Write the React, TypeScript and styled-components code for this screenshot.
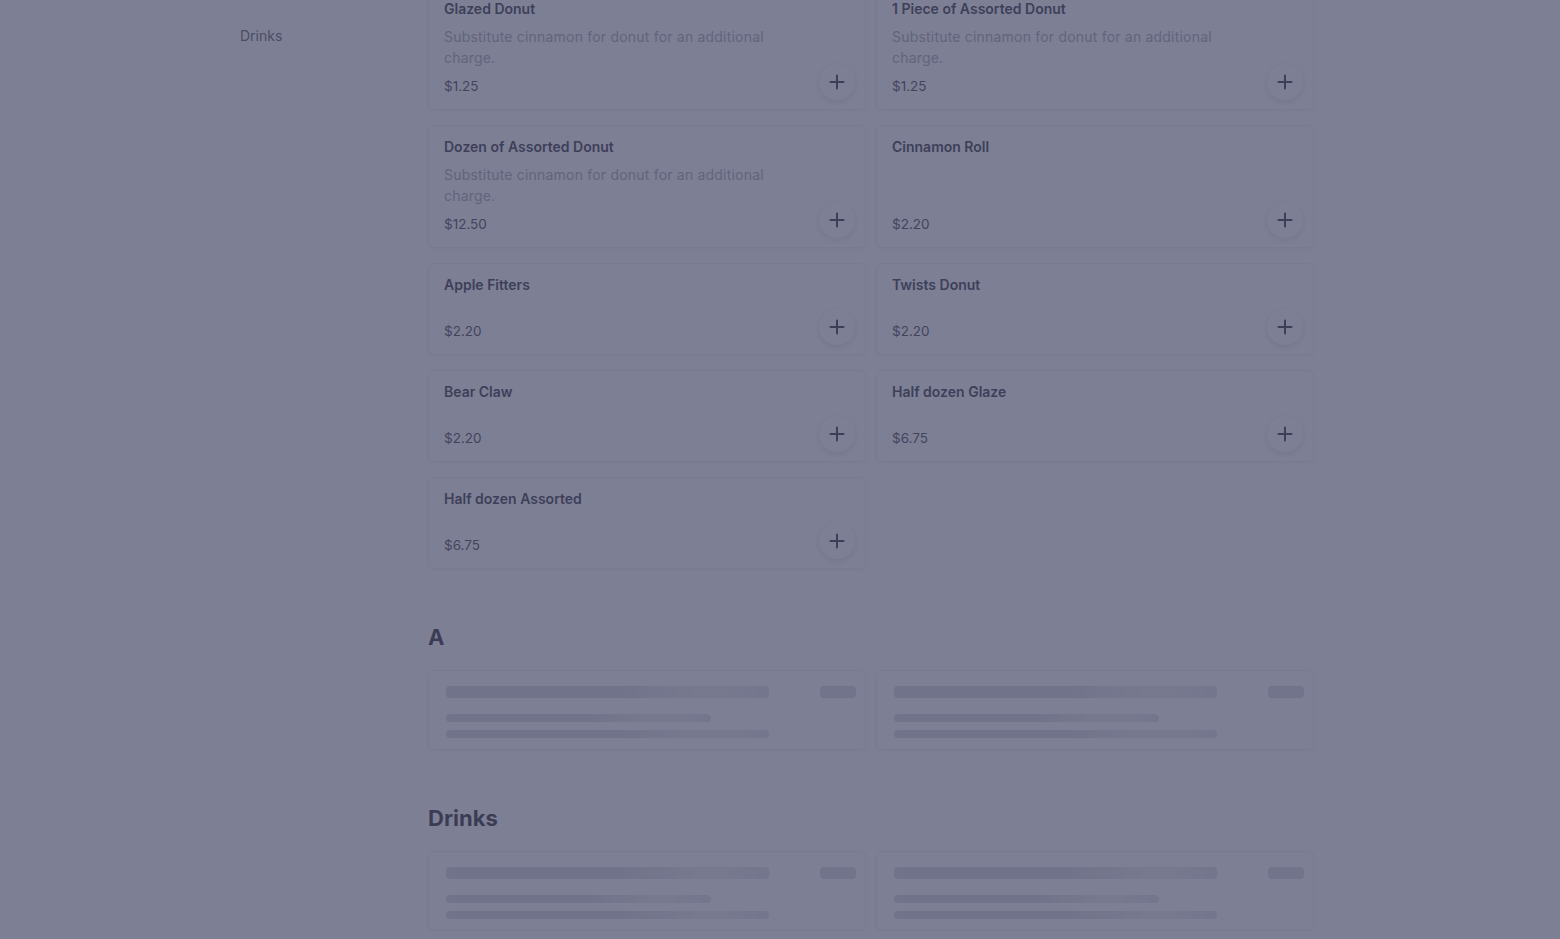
import styled, { createGlobalStyle } from "styled-components";

const GlobalStyle = createGlobalStyle`
    html, body {
        margin: 0;
        padding: 0;
        background: #fff;
        font-family: Inter, "Noto Sans", sans-serif;
        color: #1f1f2e;
        overflow: hidden;
    }
`

interface I_Item {
    name: string
    description?: string
    price: string
}

const items: I_Item[] = [
    { name: "Glazed Donut", description: "Substitute cinnamon for donut for an additional charge.", price: "$1.25" },
    { name: "1 Piece of Assorted Donut", description: "Substitute cinnamon for donut for an additional charge.", price: "$1.25" },
    { name: "Dozen of Assorted Donut", description: "Substitute cinnamon for donut for an additional charge.", price: "$12.50" },
    { name: "Cinnamon Roll", price: "$2.20" },
    { name: "Apple Fitters", price: "$2.20" },
    { name: "Twists Donut", price: "$2.20" },
    { name: "Bear Claw", price: "$2.20" },
    { name: "Half dozen Glaze", price: "$6.75" },
    { name: "Half dozen Assorted", price: "$6.75" },
]

const Page = styled.div`
    width: 1080px;
    margin: -13px auto 0;
    display: grid;
    grid-template-columns: 188px 886px;
`

const Sidebar = styled.nav`
    padding-top: 39px;
`

const SideLink = styled.div`
    font-size: 14px;
    line-height: 20px;
    color: #575766;
    cursor: pointer;
`

const Main = styled.main`
    display: flex;
    flex-direction: column;
`

const Grid = styled.div`
    display: grid;
    grid-template-columns: 1fr 1fr;
    gap: 15px 10px;
`

const Card = styled.div`
    background: #fff;
    border: 1px solid #ededf1;
    border-radius: 6px;
    box-shadow: 0 2px 6px rgba(30, 30, 60, 0.05);
    min-height: 92px;
    box-sizing: border-box;
    padding: 11px 10px 9px 15px;
    display: flex;
    flex-direction: column;
`

const Title = styled.div`
    font-size: 14px;
    font-weight: 600;
    line-height: 20px;
    color: #2a2a3a;
`

const Description = styled.div`
    font-size: 14px;
    line-height: 21px;
    letter-spacing: 0.2px;
    color: #a4a4b0;
    max-width: 340px;
    margin: 7px 0 -4px;
`

const Footer = styled.div`
    margin-top: auto;
    display: flex;
    align-items: flex-end;
    justify-content: space-between;
    height: 36px;
`

const Price = styled.div`
    font-size: 13.5px;
    line-height: 18px;
    color: #3a3a4a;
    margin-bottom: 5px;
`

const AddButton = styled.button`
    width: 36px;
    height: 36px;
    border-radius: 50%;
    border: none;
    background: #fff;
    box-shadow: 0 2px 6px rgba(20, 20, 50, 0.14);
    display: flex;
    align-items: center;
    justify-content: center;
    padding: 0;
    cursor: pointer;
    color: #2a2a3a;
`

const Section = styled.section`
    margin-top: 54px;
`

const Heading = styled.h2`
    margin: 0 0 19px;
    font-size: 22px;
    line-height: 28px;
    font-weight: 700;
    color: #1f1f2e;
`

const SkeletonCard = styled(Card)`
    height: 80px;
    min-height: 80px;
    padding: 15px 9px 11px 17px;
    display: grid;
    grid-template-columns: 323px 1fr 36px;
    grid-template-rows: 12px 1fr 8px;
    row-gap: 0;
`

const Bar = styled.div<{ $width?: string; $height: number; $solid?: boolean }>`
    height: ${({ $height }) => $height}px;
    width: ${({ $width }) => $width || "100%"};
    border-radius: 4px;
    background: ${({ $solid }) => $solid
        ? "#dadae0"
        : "linear-gradient(90deg, #d8d8de 0%, #d8d8de 55%, #e6e6eb 72%, #ececf0 82%, #e0e0e6 100%)"};
`

const BarStack = styled.div`
    grid-column: 1 / 2;
    grid-row: 2 / 4;
    display: flex;
    flex-direction: column;
    justify-content: flex-end;
    gap: 8px;
`

const Overlay = styled.div`
    position: fixed;
    inset: 0;
    background: rgba(70, 72, 102, 0.7);
`

const PlusIcon = () => (
    <svg width="16" height="16" viewBox="0 0 16 16" fill="none">
        <path d="M8 1.5v13M1.5 8h13" stroke="currentColor" strokeWidth="2" strokeLinecap="round" />
    </svg>
)

const ItemCard = ({ item }: { item: I_Item }) => (
    <Card>
        <Title>{item.name}</Title>
        {item.description && <Description>{item.description}</Description>}
        <Footer>
            <Price>{item.price}</Price>
            <AddButton aria-label="Add">
                <PlusIcon />
            </AddButton>
        </Footer>
    </Card>
)

const LoadingCard = () => (
    <SkeletonCard>
        <Bar $height={12} />
        <div />
        <Bar $height={12} $solid />
        <BarStack>
            <Bar $height={8} $width="82%" />
            <Bar $height={8} />
        </BarStack>
    </SkeletonCard>
)

export default function App() {
    return (
        <>
            <GlobalStyle />
            <Page>
                <Sidebar>
                    <SideLink>Drinks</SideLink>
                </Sidebar>
                <Main>
                    <Grid>
                        {items.map(item => <ItemCard key={item.name} item={item} />)}
                    </Grid>
                    <Section>
                        <Heading>A</Heading>
                        <Grid>
                            <LoadingCard />
                            <LoadingCard />
                        </Grid>
                    </Section>
                    <Section>
                        <Heading>Drinks</Heading>
                        <Grid>
                            <LoadingCard />
                            <LoadingCard />
                        </Grid>
                    </Section>
                </Main>
            </Page>
            <Overlay />
        </>
    )
}
